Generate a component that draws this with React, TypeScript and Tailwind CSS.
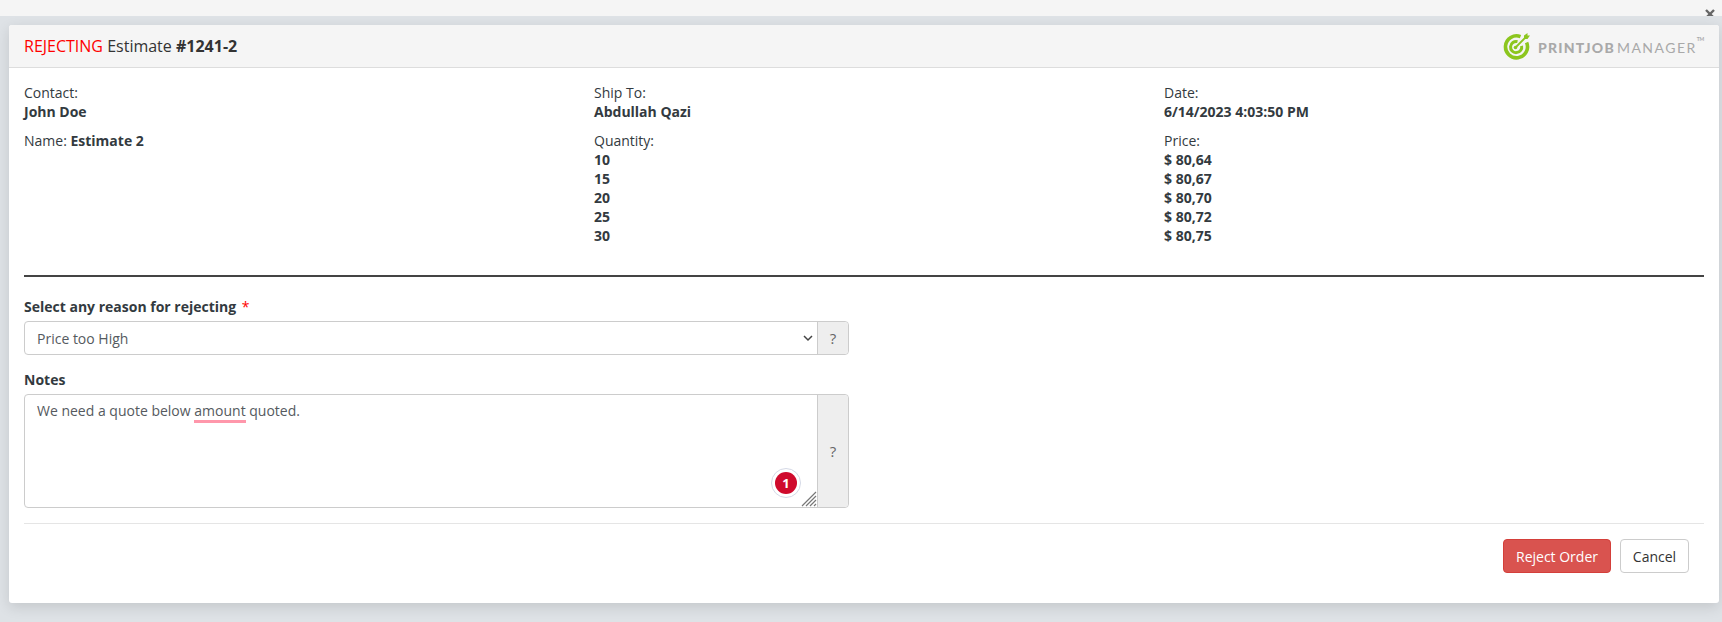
import React from "react";

function Logo() {
  return (
    <div className="flex items-center text-[#a9a9a9] font-['Lato',sans-serif] leading-none">
      <svg width="28" height="28" viewBox="0 0 28 28" className="mr-[7px] mt-[-3px]">
        <path d="M17.5 4.6 A11 11 0 1 0 23.6 10.5" fill="none" stroke="#8cc61e" strokeWidth="3.6" />
        <path d="M14.5 9.6 A5.6 5.6 0 1 0 18.6 13.8" fill="none" stroke="#8cc61e" strokeWidth="3" />
        <path d="M12.5 15.5 L23 5" stroke="#8cc61e" strokeWidth="1.8" fill="none" />
        <path d="M21 3.5 L24.5 1 L24.5 3.6 L27 3.6 L24.5 7 L21 7 Z" fill="#8cc61e" />
        <circle cx="12.5" cy="15.5" r="1.8" fill="#8cc61e" />
      </svg>
      <span className="text-[14px] font-black tracking-[1.2px]">PRINTJOB</span>
      <span className="text-[14px] font-normal tracking-[1.5px] ml-[2px]">MANAGER</span>
      <span className="text-[5px] font-bold self-start mt-[2px] tracking-[-0.3px]">TM</span>
    </div>
  );
}

function Help() {
  return (
    <div className="w-[31px] shrink-0 flex items-center justify-center bg-[#eeeeee] border-l border-[#cccccc] text-[15px] text-[#666666] rounded-r-[4px]">
      ?
    </div>
  );
}

function Values({ items }: { items: string[] }) {
  return (
    <div className="font-bold -mt-px">
      {items.map((i) => (
        <div key={i}>{i}</div>
      ))}
    </div>
  );
}

export default function App() {
  return (
    <div className="h-[622px] bg-[#dee2e6] text-[14px] leading-[19.2px] text-[#333a40] font-['Open_Sans',sans-serif] overflow-hidden">
      <div className="h-[16px] bg-[#f5f5f5] flex justify-end pr-[7px]">
        <svg width="10" height="7" viewBox="0 0 10 7" className="mt-[9px]">
          <path d="M1 1 L9 9 M9 1 L1 9" stroke="#666666" strokeWidth="2.4" />
        </svg>
      </div>
      <div className="mt-[9px] ml-[9px] w-[1710px] h-[578px] bg-white rounded-[3px] shadow-[0_4px_14px_rgba(0,0,0,0.12)]">
        <div className="h-[43px] bg-[#f5f5f5] border-b border-[#dddddd] rounded-t-[3px] px-[15px] flex items-center justify-between">
          <div className="text-[16px] text-[#333333] pt-[2px]">
            <span className="text-[#ff0000]">REJECTING</span> Estimate <b>#1241-2</b>
          </div>
          <div className="pt-[3px]">
            <Logo />
          </div>
        </div>

        <div className="px-[15px] pt-[15px]">
          <div className="grid grid-cols-3 -mx-[15px] h-[192px]">
            <div className="px-[15px]">
              <div>Contact:</div>
              <div className="font-bold">John Doe</div>
              <div className="mt-[10px]">
                Name: <b>Estimate 2</b>
              </div>
            </div>
            <div className="px-[15px]">
              <div>Ship To:</div>
              <div className="font-bold">Abdullah Qazi</div>
              <div className="mt-[10px]">Quantity:</div>
              <Values items={["10", "15", "20", "25", "30"]} />
            </div>
            <div className="px-[15px]">
              <div>Date:</div>
              <div className="font-bold">6/14/2023 4:03:50 PM</div>
              <div className="mt-[10px]">Price:</div>
              <Values items={["$ 80,64", "$ 80,67", "$ 80,70", "$ 80,72", "$ 80,75"]} />
            </div>
          </div>

          <div className="h-[2px] bg-[#444444] mb-[20px]" />

          <div className="w-[825px]">
            <div className="font-bold mb-[5px]">
              Select any reason for rejecting <span className="text-[#ff0000] font-normal ml-[2px]">*</span>
            </div>
            <div className="flex h-[34px] border border-[#cccccc] rounded-[4px] bg-white">
              <div className="flex-1 relative flex items-center pl-[12px] text-[#555a60]">
                Price too High
                <svg width="10" height="7" viewBox="0 0 10 7" className="absolute right-[4px] top-[13px]">
                  <path d="M1 1 L5 5 L9 1" fill="none" stroke="#444444" strokeWidth="1.5" />
                </svg>
              </div>
              <Help />
            </div>

            <div className="font-bold mt-[15px] mb-[5px]">Notes</div>
            <div className="flex h-[114px] border border-[#cccccc] rounded-[4px] bg-white">
              <div className="flex-1 relative pl-[12px] pt-[6px] text-[#555a60]">
                We need a quote below{" "}
                <span className="border-b-[3px] border-[#ff97ab]">amount</span> quoted.
                <div className="absolute right-[16px] bottom-[9px] w-[30px] h-[30px] rounded-full bg-white border border-[#d5d9e6] flex items-center justify-center">
                  <div className="w-[22px] h-[22px] rounded-full bg-[#cf0a2c] flex items-center justify-center text-white font-bold text-[13px]">
                    1
                  </div>
                </div>
                <svg width="16" height="16" viewBox="0 0 16 16" className="absolute right-[0px] bottom-[0px]">
                  <path d="M1 15 L15 1 M5 15 L15 5 M9 15 L15 9 M13 15 L15 13" stroke="#777777" strokeWidth="1.2" />
                </svg>
              </div>
              <Help />
            </div>
          </div>

          <div className="h-px bg-[#e5e5e5] mt-[15px]" />

          <div className="flex justify-end gap-[9px] pr-[15px] mt-[15px]">
            <button className="h-[34px] w-[108px] bg-[#d9534f] border border-[#d43f3a] text-white rounded-[4px]">
              Reject Order
            </button>
            <button className="h-[34px] w-[69px] bg-white border border-[#cccccc] text-[#333333] rounded-[4px]">
              Cancel
            </button>
          </div>
        </div>
      </div>
    </div>
  );
}
